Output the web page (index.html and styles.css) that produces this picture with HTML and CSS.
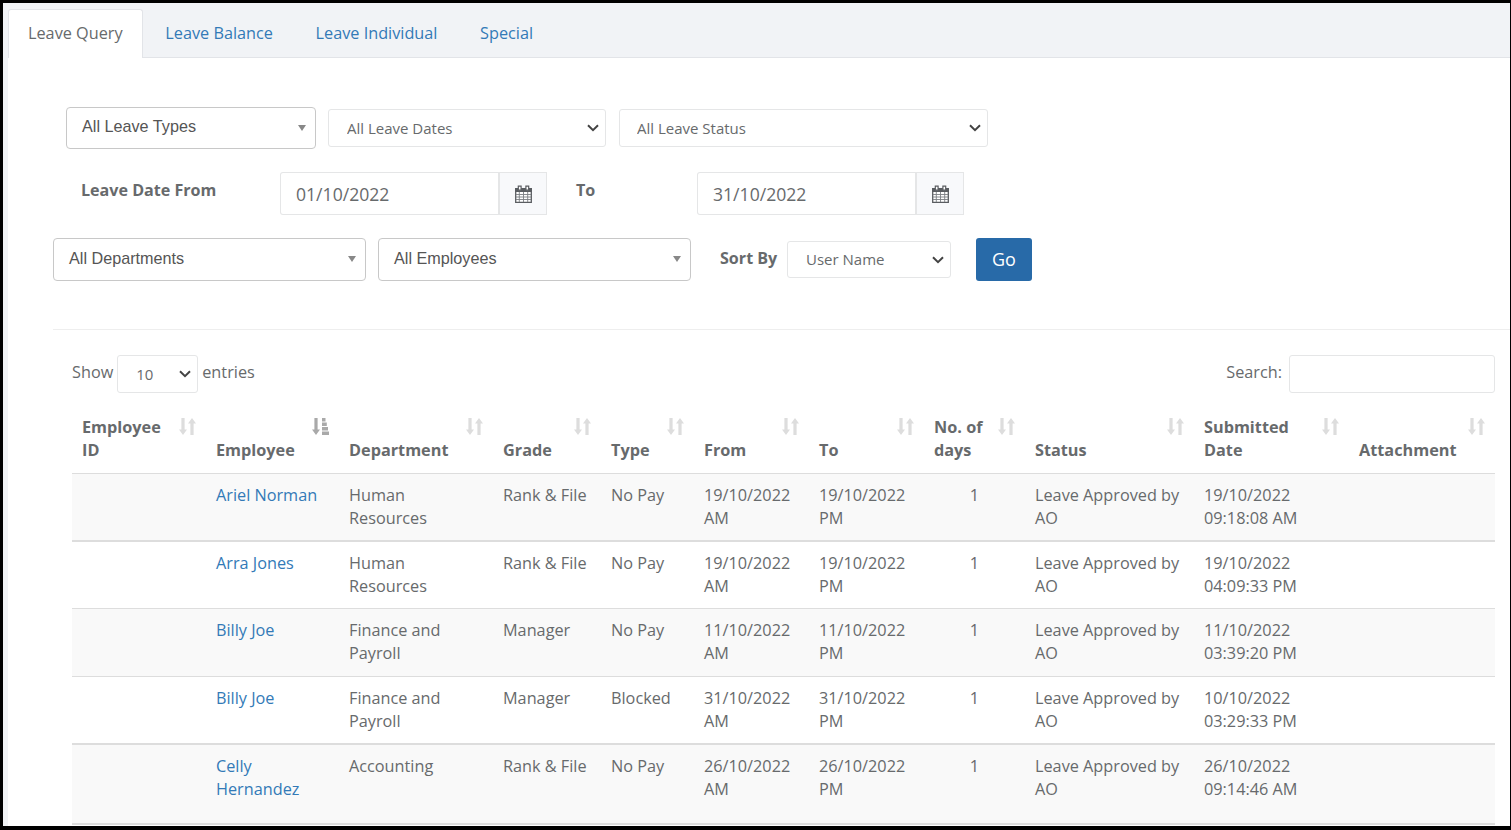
FILE: index.html
```html
<!DOCTYPE html>
<html lang="en">
<head>
    <meta charset="UTF-8">
    <meta name="viewport" content="width=device-width, initial-scale=1.0">
    <title>Leave Query</title>
    <link rel="stylesheet" href="styles.css">
</head>
<body>
    <svg class="defs" width="0" height="0">
        <symbol id="cal" viewBox="0 0 17 18">
            <path d="M.7 3.700h15.600v13.600H.7z" fill="#fff" stroke="#5a5d61" stroke-width="1.300"/>
            <path d="M0 3h17v4H0z" fill="#5a5d61"/>
            <path d="M3.300 1.200h2.800v4H3.300zM10.900 1.200h2.800v4h-2.800z" fill="#fff" stroke="#5a5d61" stroke-width="1.200"/>
            <path d="M1 9.500h15M1 12h15M1 14.500h15M4.300 7v10M8.500 7v10M12.700 7v10" stroke="#7c7f83" stroke-width=".9"/>
        </symbol>
        <symbol id="sort" viewBox="0 0 17 17">
            <path d="M2.400 0h3.200v11.500H8L4 17 0 11.500h2.400zM11.400 17h3.200V5.500H17L13 0 9 5.500h2.400z"/>
        </symbol>
        <symbol id="sort-on" viewBox="0 0 17 17">
            <path d="M2.400 0h3.200v11.500H8L4 17 0 11.500h2.400z"/>
            <path d="M10 0h3.500v3.500H10zM10 4.500h4.800V8H10zM10 9h6v3.500h-6zM10 13.500h7V17h-7z"/>
        </symbol>
    </svg>

    <div class="page">
        <ul class="tabs">
            <li class="tab active">Leave Query</li>
            <li class="tab">Leave Balance</li>
            <li class="tab">Leave Individual</li>
            <li class="tab">Special</li>
        </ul>

        <div class="content">
            <div class="filters">
                <div class="row row-types">
                    <div class="combo combo-types">All Leave Types</div>
                    <select class="field field-dates"><option>All Leave Dates</option></select>
                    <select class="field field-status"><option>All Leave Status</option></select>
                </div>
                <div class="row row-dates">
                    <label class="label label-from">Leave Date From</label>
                    <div class="date">
                        <input class="date-input" type="text" value="01/10/2022">
                        <span class="date-addon"><svg width="17" height="18"><use href="#cal"/></svg></span>
                    </div>
                    <label class="label label-to">To</label>
                    <div class="date">
                        <input class="date-input" type="text" value="31/10/2022">
                        <span class="date-addon"><svg width="17" height="18"><use href="#cal"/></svg></span>
                    </div>
                </div>
                <div class="row row-people">
                    <div class="combo combo-wide">All Departments</div>
                    <div class="combo combo-wide">All Employees</div>
                    <label class="label label-sort">Sort By</label>
                    <select class="field field-sort"><option>User Name</option></select>
                    <button class="btn-go">Go</button>
                </div>
            </div>

            <hr class="divider">

            <div class="table-wrap">
                <div class="table-top">
                    <div class="length"><span class="top-text">Show</span> <select class="field field-length"><option>10</option></select> <span class="top-text">entries</span></div>
                    <div class="search"><span class="top-text">Search:</span> <input class="search-input" type="text"></div>
                </div>

                <table class="data">
                    <colgroup>
                        <col class="c1"><col class="c2"><col class="c3"><col class="c4"><col class="c5"><col class="c6">
                        <col class="c7"><col class="c8"><col class="c9"><col class="c10"><col class="c11">
                    </colgroup>
                    <thead>
                        <tr>
                            <th>Employee ID<svg class="sort" width="17" height="17"><use href="#sort"/></svg></th>
                            <th>Employee<svg class="sort on" width="17" height="17"><use href="#sort-on"/></svg></th>
                            <th>Department<svg class="sort" width="17" height="17"><use href="#sort"/></svg></th>
                            <th>Grade<svg class="sort" width="17" height="17"><use href="#sort"/></svg></th>
                            <th>Type<svg class="sort" width="17" height="17"><use href="#sort"/></svg></th>
                            <th>From<svg class="sort" width="17" height="17"><use href="#sort"/></svg></th>
                            <th>To<svg class="sort" width="17" height="17"><use href="#sort"/></svg></th>
                            <th>No. of days<svg class="sort" width="17" height="17"><use href="#sort"/></svg></th>
                            <th>Status<svg class="sort" width="17" height="17"><use href="#sort"/></svg></th>
                            <th>Submitted Date<svg class="sort" width="17" height="17"><use href="#sort"/></svg></th>
                            <th>Attachment<svg class="sort" width="17" height="17"><use href="#sort"/></svg></th>
                        </tr>
                    </thead>
                    <tbody>
                        <tr class="odd thick">
                            <td></td><td><a href="#">Ariel Norman</a></td><td>Human Resources</td><td>Rank &amp; File</td><td>No Pay</td>
                            <td>19/10/2022 AM</td><td>19/10/2022 PM</td><td class="num">1</td><td>Leave Approved by AO</td><td>19/10/2022 09:18:08 AM</td><td></td>
                        </tr>
                        <tr>
                            <td></td><td><a href="#">Arra Jones</a></td><td>Human Resources</td><td>Rank &amp; File</td><td>No Pay</td>
                            <td>19/10/2022 AM</td><td>19/10/2022 PM</td><td class="num">1</td><td>Leave Approved by AO</td><td>19/10/2022 04:09:33 PM</td><td></td>
                        </tr>
                        <tr class="odd roomy">
                            <td></td><td><a href="#">Billy Joe</a></td><td>Finance and Payroll</td><td>Manager</td><td>No Pay</td>
                            <td>11/10/2022 AM</td><td>11/10/2022 PM</td><td class="num">1</td><td>Leave Approved by AO</td><td>11/10/2022 03:39:20 PM</td><td></td>
                        </tr>
                        <tr class="thick short">
                            <td></td><td><a href="#">Billy Joe</a></td><td>Finance and Payroll</td><td>Manager</td><td>Blocked</td>
                            <td>31/10/2022 AM</td><td>31/10/2022 PM</td><td class="num">1</td><td>Leave Approved by AO</td><td>10/10/2022 03:29:33 PM</td><td></td>
                        </tr>
                        <tr class="odd tall">
                            <td></td><td><a href="#">Celly Hernandez</a></td><td>Accounting</td><td>Rank &amp; File</td><td>No Pay</td>
                            <td>26/10/2022 AM</td><td>26/10/2022 PM</td><td class="num">1</td><td>Leave Approved by AO</td><td>26/10/2022 09:14:46 AM</td><td></td>
                        </tr>
                    </tbody>
                </table>
            </div>
        </div>
    </div>
</body>
</html>
```

FILE: styles.css
```css
* {
    margin: 0;
    padding: 0;
    box-sizing: border-box;
}

html, body {
    height: 830px;
    overflow: hidden;
}

body {
    font-family: 'Open Sans', sans-serif;
    font-size: 16.25px;
    color: #676a6c;
    background: #000;
    padding: 3px 1px 4px 3px;
}

.defs {
    position: absolute;
}

.page {
    height: 823px;
    overflow: hidden;
    background: #f1f3f6;
    padding-left: 5px;
}

.tabs {
    display: flex;
    list-style: none;
    height: 54px;
    padding-top: 6px;
}

.tab {
    padding: 0 21.3px;
    height: 49px;
    line-height: 48px;
    color: #337ab7;
}

.tab.active {
    width: 135px;
    padding: 0 0 0 19px;
    margin-right: 1px;
    line-height: 47px;
    color: #676a6c;
    background: #fff;
    border: 1px solid #e2e4e8;
    border-bottom: none;
    border-radius: 3px 3px 0 0;
    position: relative;
    z-index: 1;
}

.content {
    background: #fff;
    border-top: 1px solid #e2e4e8;
    height: 769px;
    padding-top: 49px;
}

.filters {
    padding-left: 45px;
}

.row {
    display: flex;
    align-items: center;
}

.row-types {
    height: 42px;
    padding-left: 13px;
}

.row-dates {
    height: 43px;
    margin-top: 23px;
    padding-left: 28px;
}

.row-people {
    height: 43px;
    margin-top: 23px;
}

.combo {
    position: relative;
    height: 42px;
    line-height: 37px;
    padding-left: 15px;
    font-family: 'Liberation Sans', sans-serif;
    font-size: 16.2px;
    color: #555;
    background: #fff;
    border: 1px solid #c8c8c8;
    border-radius: 4px;
}

.combo::after {
    content: "";
    position: absolute;
    right: 9px;
    top: 17px;
    border-left: 4px solid transparent;
    border-right: 4px solid transparent;
    border-top: 6px solid #888;
}

.combo-types {
    width: 250px;
}

.combo-wide {
    width: 313px;
    height: 43px;
    line-height: 39px;
}

.combo-wide + .combo-wide {
    margin-left: 12px;
}

.field {
    appearance: none;
    font-family: 'Open Sans', sans-serif;
    font-size: 15px;
    color: #676a6c;
    background: #fff url("data:image/svg+xml,%3Csvg xmlns='http://www.w3.org/2000/svg' width='12' height='8'%3E%3Cpath d='M1 1.200l5 5 5-5' fill='none' stroke='%23444' stroke-width='2'/%3E%3C/svg%3E") no-repeat right 6px center;
    border: 1px solid #e5e6e7;
    border-radius: 3px;
    padding-left: 18px;
    outline: none;
}

.field-dates {
    width: 278px;
    height: 38px;
    margin-left: 12px;
}

.field-status {
    width: 369px;
    height: 38px;
    margin-left: 13px;
    padding-left: 17px;
}

.field-sort {
    width: 164px;
    height: 37px;
    margin-left: 9px;
    padding-bottom: 2px;
}

.field-length {
    width: 81px;
    height: 38px;
    margin: 0 1px;
}

.label {
    font-size: 16.1px;
    font-weight: 700;
    color: #676a6c;
    position: relative;
}

.row-dates .label {
    top: -4px;
}

.label-from {
    width: 199px;
}

.label-to {
    width: 150px;
    padding-left: 29px;
}

.label-sort {
    width: 58px;
    top: -2px;
    margin-left: 29px;
    white-space: nowrap;
}

.date {
    display: flex;
    height: 43px;
}

.date-input {
    width: 220px;
    height: 43px;
    font-family: 'Open Sans', sans-serif;
    font-size: 17.6px;
    color: #676a6c;
    padding: 0 15px;
    border: 1px solid #e5e6e7;
    border-right-width: 2px;
    border-radius: 3px 0 0 3px;
    outline: none;
}

.date-addon {
    display: flex;
    align-items: center;
    justify-content: center;
    width: 47px;
    background: #f8f9fb;
    border: 1px solid #e5e6e7;
    border-left: none;
}

.btn-go {
    width: 56px;
    height: 43px;
    margin-left: 25px;
    padding-bottom: 2px;
    font-family: 'Open Sans', sans-serif;
    font-size: 18px;
    color: #fff;
    background: #286aa8;
    border: none;
    border-radius: 3px;
}

.divider {
    margin: 48px 0 0 45px;
    border: none;
    border-top: 1px solid #eeeeee;
}

.table-wrap {
    padding: 25px 15px 0 64px;
}

.table-top {
    display: flex;
    justify-content: space-between;
    align-items: center;
    height: 38px;
}

.length, .search {
    display: flex;
    align-items: center;
    gap: 3px;
}

.top-text {
    position: relative;
    top: -2px;
}

.search {
    gap: 7px;
}

.search-input {
    width: 206px;
    height: 38px;
    border: 1px solid #e5e6e7;
    border-radius: 3px;
    outline: none;
}

.data {
    width: 1423px;
    margin-top: 18px;
    border-collapse: collapse;
    table-layout: fixed;
    line-height: 23px;
}

.c1 { width: 134px; }
.c2 { width: 133px; }
.c3 { width: 154px; }
.c4 { width: 108px; }
.c5 { width: 93px; }
.c6 { width: 115px; }
.c7 { width: 115px; }
.c8 { width: 101px; }
.c9 { width: 169px; }
.c10 { width: 155px; }
.c11 { width: 146px; }

th {
    position: relative;
    height: 62px;
    padding: 4px 34px 11px 10px;
    text-align: left;
    vertical-align: bottom;
    font-weight: 700;
    border-bottom: 1px solid #dddddd;
}

.sort {
    position: absolute;
    top: 7px;
    right: 10px;
    fill: #dddddd;
}

.sort.on {
    fill: #a9a9a9;
}

td {
    padding: 10px;
    height: 67px;
    vertical-align: top;
    border-bottom: 1px solid #dddddd;
}

.odd td {
    background: #f9f9f9;
}

.roomy td {
    height: 68px;
}

.thick td {
    height: 68px;
    border-bottom: 2px solid #dddddd;
}

.thick.short td {
    height: 67px;
}

.tall td {
    height: 80px;
    border-bottom: 2px solid #dddddd;
}

.num {
    text-align: center;
}

a {
    color: #337ab7;
    text-decoration: none;
}
```
